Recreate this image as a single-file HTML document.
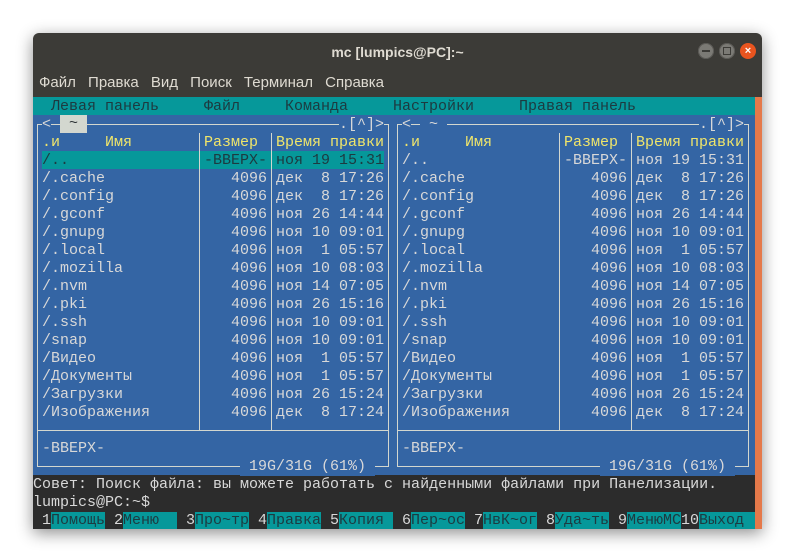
<!DOCTYPE html>
<html><head><meta charset="utf-8"><style>
html,body{margin:0;padding:0;background:#fff;width:794px;height:559px;overflow:hidden}
.win{position:absolute;left:33px;top:33px;width:729px;height:496px;background:#3c3b37;box-shadow:0 4px 16px rgba(0,0,0,.45);border-radius:6px 6px 0 0}
.title{position:absolute;left:0;top:1px;width:729px;height:36px;text-align:center;color:#dfdbd2;font:bold 14px "Liberation Sans",sans-serif;line-height:36px}
.menu{position:absolute;left:6px;top:41px;color:#dfdbd2;font:15px "Liberation Sans","DejaVu Sans",sans-serif;word-spacing:8px}
.btn{position:absolute;top:10px;width:16px;height:16px;border-radius:50%;background:#7b7a75;box-shadow:inset 0 0 0 1px #5a5955}
.term{position:absolute;left:33px;top:97px;width:722px;height:432px;background:#2c2c2c;font:15px "Liberation Mono","DejaVu Sans Mono",monospace;color:#d8d8d8;overflow:hidden}
.sb{position:absolute;left:755px;top:97px;width:7px;height:432px;background:#e5794a}
.r{position:absolute;left:0;width:722px;height:18px;line-height:18px;white-space:pre}
.r span{position:absolute;top:1px}
.blue{position:absolute;left:0;top:18px;width:722px;height:360px;background:#3465a4}
.cy{background:#06989a;color:#1d3a40}
.ln{position:absolute;background:#d3d7cf}
.y{color:#f0e56a}
.s{width:63px;text-align:right}
.s2{width:63px;text-align:right}
.bb{background:#3465a4}
</style></head><body>
<div class="win">
 <div class="title">mc [lumpics@PC]:~</div>
 <div class="btn" style="left:665px"><div style="position:absolute;left:4px;top:7px;width:8px;height:2px;background:#3c3b37"></div></div>
 <div class="btn" style="left:686px"><div style="position:absolute;left:4px;top:4px;width:6px;height:6px;border:1px solid #3c3b37"></div></div>
 <div class="btn" style="left:707px;background:#e9541f;box-shadow:none;color:#fff;font:bold 11px 'Liberation Sans';text-align:center;line-height:16px">×</div>
 <div class="menu">Файл Правка Вид Поиск Терминал Справка</div>
</div>
<div class="sb"></div>
<div class="term">
 <div class="r cy" style="top:0"><span style="left:18px">Левая панель</span><span style="left:171px">Файл</span><span style="left:252px">Команда</span><span style="left:360px">Настройки</span><span style="left:486px">Правая панель</span></div>
 <div class="blue"></div>
 <div class="ln" style="left:4px;top:27px;width:352px;height:1px"></div>
 <div class="ln" style="left:4px;top:369px;width:352px;height:1px"></div>
 <div class="ln" style="left:4px;top:27px;width:1px;height:342px"></div>
 <div class="ln" style="left:355px;top:27px;width:1px;height:342px"></div>
 <div class="ln" style="left:364px;top:27px;width:352px;height:1px"></div>
 <div class="ln" style="left:364px;top:369px;width:352px;height:1px"></div>
 <div class="ln" style="left:364px;top:27px;width:1px;height:342px"></div>
 <div class="ln" style="left:715px;top:27px;width:1px;height:342px"></div>
 <div class="ln" style="left:4px;top:333px;width:352px;height:1px"></div>
 <div class="ln" style="left:364px;top:333px;width:352px;height:1px"></div>
 <div class="r" style="top:18px"><span class="bb" style="left:9px">&lt;</span><span style="left:27px;top:0;height:18px;background:#d3d7cf;color:#2e3436"> ~ </span><span class="bb" style="left:306px">.[^]&gt;</span><span class="bb" style="left:369px">&lt;</span><span class="bb" style="left:387px"> ~ </span><span class="bb" style="left:666px">.[^]&gt;</span></div>
 <div class="r y" style="top:36px"><span style="left:9px">.и</span><span style="left:72px">Имя</span><span style="left:171px">Размер</span><span style="left:243px">Время правки</span><span style="left:369px">.и</span><span style="left:432px">Имя</span><span style="left:531px">Размер</span><span style="left:603px">Время правки</span></div>
 <div class="r" style="top:54px"><span class="cy" style="left:9px;top:0;width:342px;height:18px"></span></div>
 <div class="ln" style="left:166px;top:36px;width:1px;height:297px"></div>
 <div class="ln" style="left:238px;top:36px;width:1px;height:297px"></div>
 <div class="ln" style="left:526px;top:36px;width:1px;height:297px"></div>
 <div class="ln" style="left:598px;top:36px;width:1px;height:297px"></div>
 <div class="r" style="top:342px"><span style="left:9px">-ВВЕРХ-</span><span style="left:369px">-ВВЕРХ-</span></div>
 <div class="r" style="top:360px"><span class="bb" style="left:207px"> 19G/31G (61%) </span><span class="bb" style="left:567px"> 19G/31G (61%) </span></div>
 <div class="r" style="top:378px"><span style="left:0">Совет: Поиск файла: вы можете работать с найденными файлами при Панелизации.</span></div>
 <div class="r" style="top:396px"><span style="left:0">lumpics@PC:~$</span></div>
 <div class="r" style="top:414px">
  <span style="left:9px">1</span><span class="cy" style="left:18px;width:54px">Помощь</span>
  <span style="left:81px">2</span><span class="cy" style="left:90px;width:54px">Меню</span>
  <span style="left:153px">3</span><span class="cy" style="left:162px;width:54px">Про~тр</span>
  <span style="left:225px">4</span><span class="cy" style="left:234px;width:54px">Правка</span>
  <span style="left:297px">5</span><span class="cy" style="left:306px;width:54px">Копия</span>
  <span style="left:369px">6</span><span class="cy" style="left:378px;width:54px">Пер~ос</span>
  <span style="left:441px">7</span><span class="cy" style="left:450px;width:54px">НвК~ог</span>
  <span style="left:513px">8</span><span class="cy" style="left:522px;width:54px">Уда~ть</span>
  <span style="left:585px">9</span><span class="cy" style="left:594px;width:54px">МенюMC</span>
  <span style="left:648px">10</span><span class="cy" style="left:666px;width:56px">Выход</span>
 </div>
 <div class="r" style="top:54px;color:#1d3a40"><span style="left:9px">/..</span><span class="s" style="left:171px">-ВВЕРХ-</span><span style="left:243px">ноя 19 15:31</span></div>
 <div class="r" style="top:54px"><span style="left:369px">/..</span><span class="s2" style="left:531px">-ВВЕРХ-</span><span style="left:603px">ноя 19 15:31</span></div>
 <div class="r" style="top:72px"><span style="left:9px">/.cache</span><span class="s" style="left:171px">4096</span><span style="left:243px">дек  8 17:26</span><span style="left:369px">/.cache</span><span class="s2" style="left:531px">4096</span><span style="left:603px">дек  8 17:26</span></div>
 <div class="r" style="top:90px"><span style="left:9px">/.config</span><span class="s" style="left:171px">4096</span><span style="left:243px">дек  8 17:26</span><span style="left:369px">/.config</span><span class="s2" style="left:531px">4096</span><span style="left:603px">дек  8 17:26</span></div>
 <div class="r" style="top:108px"><span style="left:9px">/.gconf</span><span class="s" style="left:171px">4096</span><span style="left:243px">ноя 26 14:44</span><span style="left:369px">/.gconf</span><span class="s2" style="left:531px">4096</span><span style="left:603px">ноя 26 14:44</span></div>
 <div class="r" style="top:126px"><span style="left:9px">/.gnupg</span><span class="s" style="left:171px">4096</span><span style="left:243px">ноя 10 09:01</span><span style="left:369px">/.gnupg</span><span class="s2" style="left:531px">4096</span><span style="left:603px">ноя 10 09:01</span></div>
 <div class="r" style="top:144px"><span style="left:9px">/.local</span><span class="s" style="left:171px">4096</span><span style="left:243px">ноя  1 05:57</span><span style="left:369px">/.local</span><span class="s2" style="left:531px">4096</span><span style="left:603px">ноя  1 05:57</span></div>
 <div class="r" style="top:162px"><span style="left:9px">/.mozilla</span><span class="s" style="left:171px">4096</span><span style="left:243px">ноя 10 08:03</span><span style="left:369px">/.mozilla</span><span class="s2" style="left:531px">4096</span><span style="left:603px">ноя 10 08:03</span></div>
 <div class="r" style="top:180px"><span style="left:9px">/.nvm</span><span class="s" style="left:171px">4096</span><span style="left:243px">ноя 14 07:05</span><span style="left:369px">/.nvm</span><span class="s2" style="left:531px">4096</span><span style="left:603px">ноя 14 07:05</span></div>
 <div class="r" style="top:198px"><span style="left:9px">/.pki</span><span class="s" style="left:171px">4096</span><span style="left:243px">ноя 26 15:16</span><span style="left:369px">/.pki</span><span class="s2" style="left:531px">4096</span><span style="left:603px">ноя 26 15:16</span></div>
 <div class="r" style="top:216px"><span style="left:9px">/.ssh</span><span class="s" style="left:171px">4096</span><span style="left:243px">ноя 10 09:01</span><span style="left:369px">/.ssh</span><span class="s2" style="left:531px">4096</span><span style="left:603px">ноя 10 09:01</span></div>
 <div class="r" style="top:234px"><span style="left:9px">/snap</span><span class="s" style="left:171px">4096</span><span style="left:243px">ноя 10 09:01</span><span style="left:369px">/snap</span><span class="s2" style="left:531px">4096</span><span style="left:603px">ноя 10 09:01</span></div>
 <div class="r" style="top:252px"><span style="left:9px">/Видео</span><span class="s" style="left:171px">4096</span><span style="left:243px">ноя  1 05:57</span><span style="left:369px">/Видео</span><span class="s2" style="left:531px">4096</span><span style="left:603px">ноя  1 05:57</span></div>
 <div class="r" style="top:270px"><span style="left:9px">/Документы</span><span class="s" style="left:171px">4096</span><span style="left:243px">ноя  1 05:57</span><span style="left:369px">/Документы</span><span class="s2" style="left:531px">4096</span><span style="left:603px">ноя  1 05:57</span></div>
 <div class="r" style="top:288px"><span style="left:9px">/Загрузки</span><span class="s" style="left:171px">4096</span><span style="left:243px">ноя 26 15:24</span><span style="left:369px">/Загрузки</span><span class="s2" style="left:531px">4096</span><span style="left:603px">ноя 26 15:24</span></div>
 <div class="r" style="top:306px"><span style="left:9px">/Изображения</span><span class="s" style="left:171px">4096</span><span style="left:243px">дек  8 17:24</span><span style="left:369px">/Изображения</span><span class="s2" style="left:531px">4096</span><span style="left:603px">дек  8 17:24</span></div>
</div>
</body></html>
